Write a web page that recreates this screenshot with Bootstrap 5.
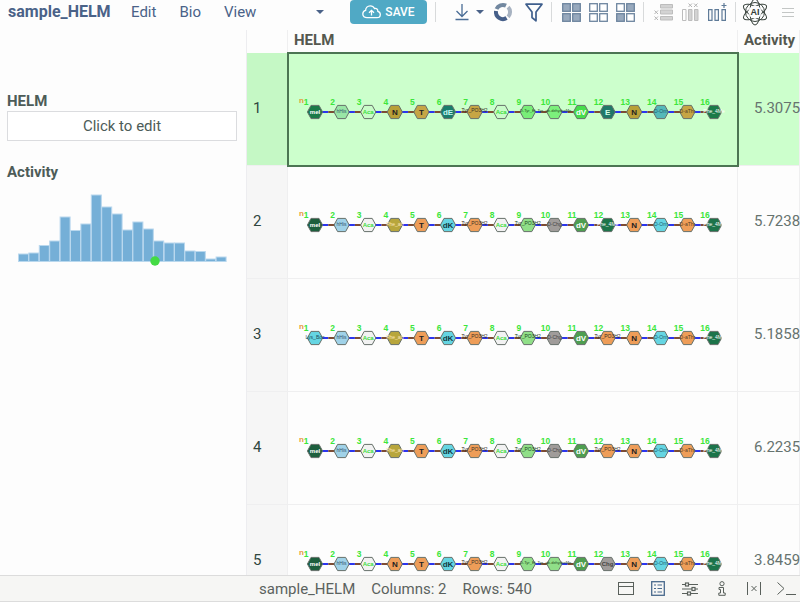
<!DOCTYPE html>
<html lang="en">
<head>
<meta charset="utf-8">
<meta name="viewport" content="width=device-width, initial-scale=1">
<title>sample_HELM</title>
<link href="https://cdn.jsdelivr.net/npm/bootstrap@5.3.0/dist/css/bootstrap.min.css" rel="stylesheet">
<style>
  body { font-family: Roboto, sans-serif; font-size: 15px; line-height: 20px; color: #4d5c58; background: #fdfdfd; }
  .app-bar { height: 30px; padding-bottom: 6px; color: #4a6288; }
  .app-menu { width: 350px; padding-left: 8px; padding-right: 25px; }
  .app-title { font-size: 16px; font-weight: 700; width: 123px; }
  .menu-link { color: #4a6288; text-decoration: none; margin-right: 23px; }
  .tool { border: 0; background: none; padding: 0; width: 27px; height: 24px; display: flex; align-items: center; justify-content: center; flex: none; }
  .tool-caret { width: 10px; }
  .tool-ai { width: 30px; height: 28px; }
  .tool-menu { width: 20px; }
  .tool svg { display: block; overflow: visible; }
  .save { width: 77px; height: 24px; border-radius: 4px; background: #50a9c5; color: #fff; font-size: 12px; font-weight: 500; padding: 0; border: 0; }
  .sep { width: 1px; height: 20px; background: #d8dadb; flex: none; }
  .file-tools { margin-left: 8px; padding-left: 10px; }
  .file-tools, .sel-tools, .col-tools { display: flex; align-items: center; }
  .sel-tools { padding: 0 4px 0 6px; }
  .col-tools { padding: 0 4px 0 6px; }
  .side { width: 247px; padding: 61px 9px 0 7px; border-right: 1px solid #ededf0; }
  .field-title { font-weight: 700; }
  .edit-box { height: 30px; border: 1px solid #dbdcdf; border-radius: 0; background: #fff; color: #4d5c58; font-size: 15px; line-height: 20px; padding: 0; }
  .act-title { margin-top: 21px; }
  .hist { width: 230px; display: block; }
  .grid { table-layout: fixed; border-collapse: separate; border-spacing: 0; width: 100%; }
  .grid th, .grid td { padding: 0; border-right: 1px solid #efeff0; white-space: nowrap; }
  .grid thead th { height: 23px; font-weight: 700; padding-left: 6px; color: #55584f; line-height: 20px; vertical-align: top; }
  .grid tbody th, .grid tbody td { height: 113px; border-bottom: 1px solid #efeff0; vertical-align: middle; }
  .grid tbody th { background: #f6f6f6; font-weight: 400; padding: 0 0 3px 6px; color: #2f4640; }
  .grid tbody .val { padding: 0 0 3px 16px; color: #66736f; }
  .grid tr.picked td { background: #cfc; }
  .grid tr.picked th { background: #c5f8c5; }
  .grid tr.picked .seq { outline: 2px solid #4c7553; outline-offset: -1px; }
  .seq svg { display: block; font-family: "Liberation Sans", Arial, sans-serif; }
  .c-num { width: 41px; }
  .c-val { width: 62px; }
  .status { height: 27px; background: #f6f6f4; border-top: 1px solid #dcdcdc; border-bottom: 1px solid #dcdcdc; padding-left: 259px; padding-right: 4px; color: #5b625e; }
  .status .tool { width: 20px; }
  .status-tools { gap: 12px; }
</style>
</head>
<body>
<div class="d-flex flex-column vh-100 overflow-hidden">
  <header class="app-bar d-flex align-items-center flex-shrink-0">
    <nav class="app-menu d-flex align-items-center flex-shrink-0" aria-label="Main">
      <span class="app-title">sample_HELM</span>
      <a class="menu-link" href="#">Edit</a>
      <a class="menu-link" href="#">Bio</a>
      <a class="menu-link" href="#">View</a>
      <button class="tool tool-caret ms-auto" type="button" aria-label="More menus"><svg width="8" height="4"><path d="M0 0H8L4 4Z" fill="#4a6288"/></svg></button>
    </nav>
    <button class="save btn d-flex align-items-center justify-content-center gap-1" type="button">
      <svg width="19" height="14" viewBox="0 0 19 14" fill="none" stroke="#fff" stroke-width="1.3"><path d="M5 12.7C2.500 12.700 .8 11.300 .8 9C.8 7 2 5.800 3.600 5.400C3.600 2.800 5.500 .8 8.200 .8C10.200 .8 11.700 1.800 12.500 3.500C14.600 3 16 4.300 15.800 6.300C17.400 6.700 18.300 7.900 18.300 9.500C18.300 11.500 16.900 12.700 15 12.700Z"/><path d="M9.500 10.500V5.500M7 7.800L9.500 5.300L12 7.800"/></svg>
      <span>SAVE</span>
    </button>
    <span class="sep ms-2"></span>
    <div class="file-tools ms-0 ps-2">
      <button class="tool ms-1" type="button" aria-label="Download"><svg width="14" height="18" viewBox="0 0 14 18" fill="none" stroke="#4a6d96" stroke-width="1.3"><path d="M7 1V13M1.500 8L7 13.500L12.500 8M.5 16.500H13.500"/></svg></button>
      <button class="tool tool-caret" type="button" aria-label="Download options"><svg width="8" height="4"><path d="M0 0H8L4 4Z" fill="#4a6288"/></svg></button>
      <button class="tool ms-1" type="button" aria-label="Refresh"><svg width="20" height="20" viewBox="-10 -10 20 20" fill="none" stroke-width="4"><path d="M-6.500 -3A7.100 7.100 0 0 1 3 -6.400" stroke="#7288a0"/><path d="M5.100 -4.900A7.100 7.100 0 0 1 5.100 4.900" stroke="#a7b2c1"/><path d="M3.600 6.100A7.100 7.100 0 0 1 -7 -1" stroke="#465f89"/></svg></button>
      <button class="tool ms-1" type="button" aria-label="Filter"><svg width="18" height="19" viewBox="0 0 18 19" fill="none" stroke="#3f5f8d" stroke-width="1.700" stroke-linejoin="round"><path d="M1 1.200H17L11 9V17.800L7 14.500V9Z"/></svg></button>
    </div>
    <span class="sep ms-1"></span>
    <div class="sel-tools" id="selTools"></div>
    <span class="sep"></span>
    <div class="col-tools">
      <button class="tool" type="button" aria-label="Remove rows"><svg width="19" height="18" viewBox="0 0 19 18"><g fill="#d3d3d3" stroke="#bdbdbd"><path d="M6.500 1.500H18.500V5H6.500ZM6.500 7H18.500V11H6.500ZM6.500 13.500H18.500V17H6.500Z"/></g><path d="M.5 7.500L4 11M4 7.500L.5 11M.5 13.500L4 17M4 13.500L.5 17" stroke="#b5b5b5"/></svg></button>
      <button class="tool" type="button" aria-label="Remove columns"><svg width="17" height="18" viewBox="0 0 17 18"><g fill="#d3d3d3" stroke="#bdbdbd"><path d="M.5 6.500H4V17.500H.5Z" fill="#fff"/><path d="M6.500 6.500H10V17.500H6.500ZM12.500 6.500H16V17.500H12.500Z"/></g><path d="M6.500 .5L10 4M10 .5L6.500 4M12 .5L15.500 4M15.500 .5L12 4" stroke="#b5b5b5"/></svg></button>
      <button class="tool" type="button" aria-label="Add column"><svg width="19" height="18" viewBox="0 0 19 18" fill="none" stroke="#5f7b98" stroke-width="1.200"><path d="M.6 6.600H4V17.400H.6ZM7 6.600H10.400V17.400H7ZM14 6.600H17.400V17.400H14ZM16 0V5M13.500 2.500H18.500"/></svg></button>
    </div>
    <span class="sep"></span>
    <button class="tool tool-ai ms-1" type="button" aria-label="AI assistant"><svg width="28" height="28" viewBox="-14 -14 28 28" fill="none" stroke="#3a443e"><ellipse rx="5" ry="13"/><ellipse rx="5" ry="13" transform="rotate(60)"/><ellipse rx="5" ry="13" transform="rotate(120)"/><circle r="9.500"/><circle r="6.500" fill="#fdfdfd" stroke="none"/><text y="3" text-anchor="middle" font-family="Liberation Sans" font-size="9" font-weight="700" fill="#333c36" stroke="none">AI</text></svg></button>
    <button class="tool tool-menu ms-2" type="button" aria-label="Menu"><svg width="12" height="9" stroke="#c3c6c5"><path d="M0 .5H12M0 4.500H12M0 8.500H12"/></svg></button>
  </header>

  <div class="d-flex flex-grow-1 overflow-hidden">
    <aside class="side flex-shrink-0">
      <div class="field-title">HELM</div>
      <button type="button" class="edit-box w-100">Click to edit</button>
      <div class="field-title act-title">Activity</div>
      <svg class="hist" id="hist" height="90" role="img" aria-label="Activity distribution"></svg>
    </aside>
    <main class="flex-grow-1 overflow-hidden">
      <table class="grid">
        <colgroup><col class="c-num"><col><col class="c-val"></colgroup>
        <thead><tr><th></th><th scope="col">HELM</th><th scope="col">Activity</th></tr></thead>
        <tbody id="rows"></tbody>
      </table>
    </main>
  </div>

  <footer class="status d-flex align-items-center flex-shrink-0">
    <span>sample_HELM</span><span class="ms-3">Columns: 2</span><span class="ms-3">Rows: 540</span>
    <div class="status-tools d-flex ms-auto">
      <button class="tool" type="button" aria-label="Window"><svg width="16" height="13" fill="none" stroke="#59605b"><rect x=".5" y=".5" width="15" height="12"/><path d="M0 4.500H16"/></svg></button>
      <button class="tool" type="button" aria-label="Properties"><svg width="14" height="15" fill="none" stroke="#49698c"><rect x=".7" y=".7" width="12.600" height="13.600" stroke-width="1.300"/><path d="M3 4H5M6.500 4H11M3 7.500H5M6.500 7.500H11M3 11H5M6.500 11H11" stroke-width="1.200"/></svg></button>
      <button class="tool" type="button" aria-label="Settings"><svg width="16" height="14" fill="#f6f6f4" stroke="#59605b" stroke-width="1.200"><path d="M0 2.500H16M0 7H16M0 11.500H16"/><rect x="3.500" y="1" width="3" height="3"/><rect x="10" y="5.500" width="3" height="3"/><rect x="5.500" y="10" width="3" height="3"/></svg></button>
      <button class="tool" type="button" aria-label="Info"><svg width="8" height="15" fill="none" stroke="#59605b"><circle cx="4" cy="2.700" r="2.100"/><path d="M1 6.500H5.500V12H7.200V14.300H.8V12H2.500V8.500H1Z"/></svg></button>
      <button class="tool" type="button" aria-label="Variables"><svg width="14" height="13" fill="none" stroke="#59605b"><path d="M.5 0V13M13.500 0V13M4.500 4L9.500 9M9.500 4L4.500 9"/></svg></button>
      <button class="tool" type="button" aria-label="Console"><svg width="19" height="13" fill="none" stroke="#59605b"><path d="M.5 .5L7 6.500L.5 12.500M9 12.500H19"/></svg></button>
    </div>
  </footer>
</div>

<script src="https://cdn.jsdelivr.net/npm/bootstrap@5.3.0/dist/js/bootstrap.bundle.min.js"></script>
<script>
  // Selection buttons: four squares, a 1 marks a filled square.
  document.getElementById('selTools').innerHTML = [['Select all', '1111'], ['Select none', '0000'], ['Invert selection', '0110']].map(([name, bits]) =>
    `<button class="tool" type="button" aria-label="${name}"><svg width="19" height="19" stroke="#6d859f" stroke-width="1.3">` +
    [...bits].map((b, i) => `<rect x="${0.7 + (i % 2) * 10}" y="${0.7 + (i >> 1) * 10}" width="7.600" height="7.600" fill="${b === '1' ? '#98a9bd' : '#fff'}"/>`).join('') +
    '</svg></button>').join('');

  // Histogram bars and the marker of the current value.
  const bins = [7, 8, 15.5, 20, 44, 30.5, 37, 66, 54, 47, 31, 39, 32, 20, 18, 18, 10, 9.5, 2, 4];
  document.getElementById('hist').innerHTML = bins.map((h, i) =>
    `<rect x="${11.5 + i * 10.4}" y="${79 - h}" width="10" height="${h + 0.5}" fill="#75afd7" stroke="#b9d8ee"/>`).join('') +
    '<circle cx="148" cy="79" r="4.700" fill="#44db44"/>';

  // Monomers: label, fill, label colour, label size.
  const M = {
    meI: ['meI', '#1d5f3d', '#fff', 6], hHis: ['hHis', '#a0d2e8', '#34566c', 5], Aca: ['Aca', '#f2f2f2', '#3ddd3d', 6],
    Phe: ['Phe_ab', '#b8a63c', '#ffe7b8', 5], N: ['N', '#ee9d58', '#222', 8], T: ['T', '#ee9d58', '#222', 8],
    dK: ['dK', '#65d5e2', '#143a42', 8], TyrP: ['Tyr_PO3H2', '#ee9d58', '#3a3025', 5], TyrG: ['Tyr_PO3H2', '#90df88', '#244a24', 5],
    Chg: ['D-Chg', '#a09c9a', '#444', 5], dV: ['dV', '#4e9e50', '#fff', 8], Me: ['Phe_4Me', '#1c744a', '#fff', 5],
    Orn: ['D-Orn', '#65d5e2', '#1d5c70', 5], Thr: ['D-aThr', '#ee9d58', '#573e26', 5], Cy: ['Lys_Boc', '#65d5e2', '#1c4c58', 5],
    Et: ['D-Tyr_Et', '#90df88', '#244a24', 4], Deh: ['Tyr_ab-dehydroMe', '#90df88', '#244a24', 4], Ch: ['Chg', '#a09c9a', '#444', 6],
    dE: ['dE', '#1a7d6c', '#bff5f0', 8], E: ['E', '#207868', '#d4ffe8', 8]
  };
  // Fills of the same monomers on the highlighted row.
  const lit = { meI: '#1b7a48', hHis: '#99e6a6', Aca: '#c8fcc8', N: '#b8a038', T: '#c6a545', TyrP: '#c6a545', Et: '#78ee78', Deh: '#7cf07c', dV: '#46dd4c', Orn: '#54b9b9', Thr: '#c6a545', Me: '#1b7a48' };
  const data = [
    ['5.3075', 'meI hHis Aca N T dE TyrP Aca Et Deh dV E N Orn Thr Me'],
    ['5.7238', 'meI hHis Aca Phe T dK TyrP Aca TyrG Chg dV Me N Orn Thr Me'],
    ['5.1858', 'Cy hHis Aca Phe T dK TyrP Aca TyrG Chg dV TyrP N Orn Thr Me'],
    ['6.2235', 'meI hHis Aca Phe T dK TyrP Aca TyrG Chg dV TyrP N Orn Thr Me'],
    ['3.8459', 'meI hHis Aca N T dK TyrP Aca Et Deh dV Ch N Orn Thr Me']
  ];
  const STEP = 26.6, X0 = 27, Y = 26;
  function chain(keys, on) {
    let lines = '', nodes = '';
    keys.forEach((k, i) => {
      const x = X0 + i * STEP, [label, fill, ink, size] = M[k];
      if (i < keys.length - 1) {
        const mid = x + STEP / 2;
        lines += `<path d="M${x} ${Y}H${mid}" stroke="#2b35ee"/><path d="M${mid} ${Y}H${x + STEP}" stroke="#7d4c33"/>`;
      }
      nodes += `<path d="M${x - 7.6} ${Y}L${x - 4} ${Y - 6.6}H${x + 4}L${x + 7.6} ${Y}L${x + 4} ${Y + 6.6}H${x - 4}Z" fill="${on && lit[k] || fill}" stroke="#66706a"/>` +
        `<text x="${x}" y="${Y + (size > 6 ? 3 : size > 5 ? 2 : label.length > 7 ? 0 : 1)}" text-anchor="middle" font-size="${size}" font-weight="${size > 5 ? 700 : 400}" fill="${ink}">${label}</text>` +
        `<text x="${x - 9}" y="${Y - 7}" text-anchor="middle" font-size="8.500" font-weight="700" fill="#3be63b">${i + 1}</text>`;
    });
    return `<svg width="449" height="46" role="img" aria-label="Peptide chain"><g stroke-width="2">${lines}</g>${nodes}<text x="11" y="17" font-size="8" font-weight="700" fill="#e79a3d">n</text></svg>`;
  }
  document.getElementById('rows').innerHTML = data.map(([v, seq], i) =>
    `<tr${i ? '' : ' class="picked"'}><th scope="row">${i + 1}</th><td class="seq">${chain(seq.split(' '), !i)}</td><td class="val">${v}</td></tr>`).join('');
</script>
</body>
</html>
